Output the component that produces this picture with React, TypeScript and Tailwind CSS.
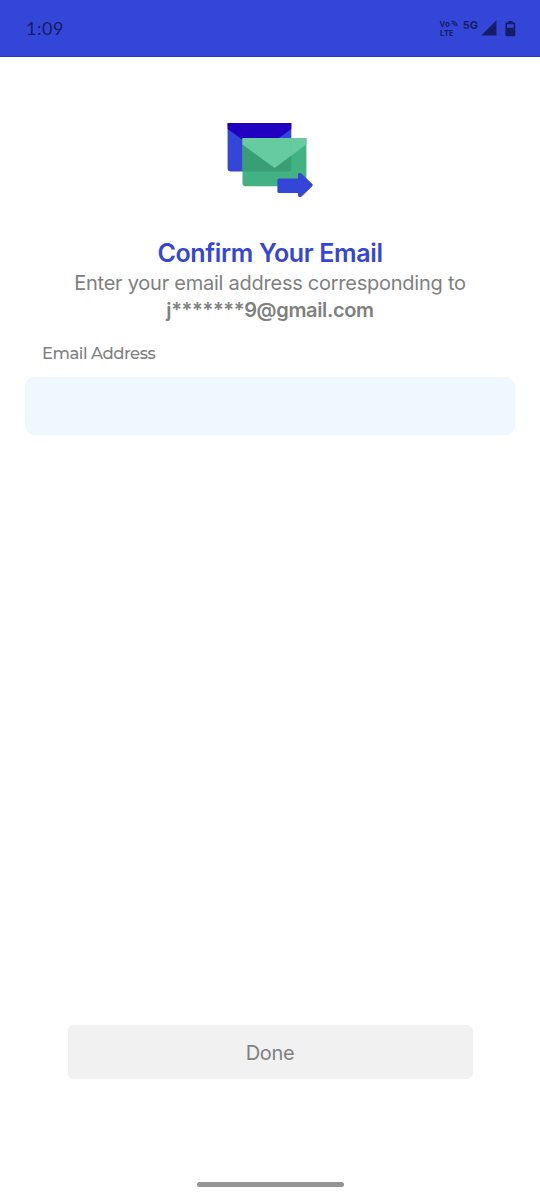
import React, { useState } from 'react';

const StatusBar: React.FC = () => (
  <header className="h-[57px] shrink-0 bg-[#3446d8] border-b border-[#2b3bc0] flex items-center justify-between pl-[26px] pr-6 text-[#141d66]">
    <span className="font-['Lato','Montserrat',sans-serif] text-[18px] leading-none tracking-[0.5px]">1:09</span>
    <div className="flex items-center">
      <div className="relative w-[17px] mr-[6px] pt-px font-['Open_Sans',sans-serif] font-bold text-[8px]">
        <div className="h-[8px] leading-[8px]">Vo</div>
        <div className="h-[9px] leading-[9px]">LTE</div>
        <svg className="absolute left-[11px] top-px" width="7" height="7" viewBox="0 0 7 7" fill="none" stroke="currentColor" strokeWidth="1">
          <path d="M0.6 1.4C3.4 0.6 6 3 6.3 6.3M0.8 3.6C2.4 3.2 3.8 4.4 4 6.3M1.2 0.7l4.6 4.8" />
        </svg>
      </div>
      <span className="font-['Inter',sans-serif] font-bold text-[11px] leading-none mr-[3px] mb-[5px]">5G</span>
      <svg className="mr-2" width="16" height="16" viewBox="0 0 16 16" fill="currentColor">
        <path d="M15.5 0.3V15.6H0.3z" />
      </svg>
      <svg className="mt-px" width="11" height="16" viewBox="0 0 11 16">
        <path fill="currentColor" fillRule="evenodd" d="M3.2 0h4.4v1.6h1.5q1.2 0 1.2 1.2v11.3q0 1.2-1.2 1.2H1.6q-1.2 0-1.2-1.2V2.8q0-1.2 1.2-1.2H3.2zM2 3.2v3.6h6.7V3.2z" />
      </svg>
    </div>
  </header>
);

const MailIcon: React.FC = () => (
  <svg width="86" height="76" viewBox="227.2 122 86 76">
    <path fill="#3446d8" d="M227.8 123H291.5V168.6Q291.5 171.6 288.5 171.6H230.8Q227.8 171.6 227.8 168.6z" />
    <path fill="#2100c2" d="M227.8 123H291.5V129L259.7 152L227.8 129z" />
    <path fill="#42b282" d="M242.7 138H306.6V183.3Q306.6 186.3 303.6 186.3H245.7Q242.7 186.3 242.7 183.3z" />
    <path fill="#389e74" d="M242.7 138H291.5V168.6Q291.5 171.6 288.5 171.6H242.7z" />
    <path fill="#67cba0" d="M242.7 138H306.6V144.6L274.8 168L242.7 144.6z" />
    <path fill="none" stroke="#5fc397" strokeWidth="0.6" d="M291.5 138V155.7" />
    <path
      fill="#3446d8"
      d="M279.2 178.4H298.2V174.4Q298.2 172.8 300 172.9Q301 173 302 174L312 183.4Q313.9 185.1 312 186.8L302 196.2Q300.5 197.5 299.2 196.9Q298.2 196.5 298.2 195.5V193H279.2Q277.6 193 277.6 191.4V180Q277.6 178.4 279.2 178.4z"
    />
  </svg>
);

export default function App() {
  const [email, setEmail] = useState('');

  return (
    <div className="w-full h-[1199px] bg-white flex flex-col font-['Inter',sans-serif] text-[#808080]">
      <StatusBar />

      <main className="flex-1 flex flex-col px-[25px]">
        <div className="flex flex-col items-center pt-[65px] text-center">
          <MailIcon />
          <h1 className="mt-[39px] h-[33px] text-[25px] leading-[33px] font-semibold tracking-[-0.35px] text-[#3446d8] whitespace-nowrap">
            Confirm Your Email
          </h1>
          <p className="text-[20px] leading-[27px] tracking-[-0.25px] whitespace-nowrap">
            Enter your email address corresponding to
            <br />
            <span className="font-semibold tracking-[-0.36px]">j*******9@gmail.com</span>
          </p>
        </div>

        <label htmlFor="email" className="mt-[17px] pl-[17px] font-['Montserrat','Lato',sans-serif] text-[16.5px] leading-6 font-medium tracking-[-0.5px]">
          Email Address
        </label>
        <input
          id="email"
          type="email"
          value={email}
          onChange={(e) => setEmail(e.target.value)}
          className="mt-3 h-[58px] w-full rounded-[9px] bg-[#eff7ff] px-4 text-[17px] outline-none"
        />

        <button
          type="button"
          disabled={!email}
          className="mt-auto mb-[103px] mx-[42.5px] h-[54px] rounded-md bg-[#f1f1f1] pt-0.5 text-[20px] tracking-[-0.3px]"
        >
          Done
        </button>
      </main>

      {/* gesture bar */}
      <div className="shrink-0 self-center mb-3 w-[147px] h-[5px] rounded-full bg-[#949494]" />
    </div>
  );
}
